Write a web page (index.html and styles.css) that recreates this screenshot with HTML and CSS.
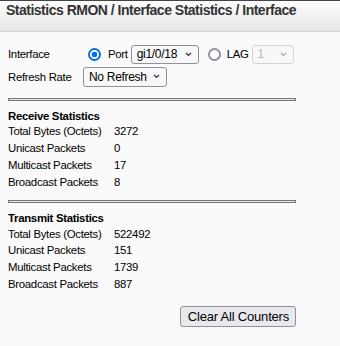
FILE: index.html
```html
<!DOCTYPE html>
<html>
<head>
<meta charset="utf-8">
<link rel="stylesheet" href="styles.css">
</head>
<body>
<div class="header"><h1 class="title">Statistics RMON / Interface Statistics / Interface</h1></div>
<div class="content">
  <div class="form-row">
    <span class="label">Interface</span>
    <input class="radio" type="radio" name="if" id="r-port" checked>
    <label class="opt" for="r-port">Port</label>
    <span class="sel-wrap"><select class="sel sel-port"><option>gi1/0/18</option></select><svg class="chev" width="7" height="5" viewBox="0 0 7 5"><path d="M1 1 L3.5 3.5 L6 1" fill="none" stroke="#333" stroke-width="1.2"/></svg></span>
    <input class="radio radio-lag" type="radio" name="if" id="r-lag">
    <label class="opt" for="r-lag">LAG</label>
    <span class="sel-wrap"><select class="sel sel-lag" disabled><option>1</option></select><svg class="chev" width="7" height="5" viewBox="0 0 7 5"><path d="M1 1 L3.5 3.5 L6 1" fill="none" stroke="#aaa" stroke-width="1.2"/></svg></span>
  </div>
  <div class="form-row row2">
    <span class="label">Refresh Rate</span>
    <span class="sel-wrap"><select class="sel sel-refresh"><option>No Refresh</option></select><svg class="chev" width="7" height="5" viewBox="0 0 7 5"><path d="M1 1 L3.5 3.5 L6 1" fill="none" stroke="#333" stroke-width="1.2"/></svg></span>
  </div>
  <hr class="sep">
  <div class="section">
    <div class="sec-title">Receive Statistics</div>
    <div class="stats">
      <span>Total Bytes (Octets)</span><span>3272</span>
      <span>Unicast Packets</span><span>0</span>
      <span>Multicast Packets</span><span>17</span>
      <span>Broadcast Packets</span><span>8</span>
    </div>
  </div>
  <hr class="sep">
  <div class="section">
    <div class="sec-title">Transmit Statistics</div>
    <div class="stats">
      <span>Total Bytes (Octets)</span><span>522492</span>
      <span>Unicast Packets</span><span>151</span>
      <span>Multicast Packets</span><span>1739</span>
      <span>Broadcast Packets</span><span>887</span>
    </div>
  </div>
  <div class="actions"><button class="btn">Clear All Counters</button></div>
</div>
</body>
</html>
```
FILE: styles.css
```css
html, body {
  margin: 0;
  padding: 0;
  background: #fafafa;
  font-family: "Liberation Sans", Arial, sans-serif;
  font-size: 11.4px;
  letter-spacing: -0.3px;
  color: #000;
}
.header {
  height: 32px;
  border-top: 1px solid #444;
  border-bottom: 1px solid #d2d2d2;
  background: linear-gradient(#fdfdfd, #e6e6e6);
  box-sizing: border-box;
}
.title {
  margin: 0;
  padding: 1px 0 0 6px;
  font-size: 14px;
  line-height: 17px;
  letter-spacing: -0.5px;
  font-weight: bold;
  color: #333;
}
.content {
  width: 288px;
  padding: 12px 8px 0 8px;
}
.form-row {
  display: flex;
  align-items: center;
  height: 20px;
}
.row2 { margin-top: 3px; }
.label { width: 75px; flex: none; }
.radio {
  appearance: none;
  -webkit-appearance: none;
  width: 13px;
  height: 13px;
  margin: 0 7px 0 5px;
  box-sizing: border-box;
  border: 2px solid #8f8f9d;
  border-radius: 50%;
  background: #fff;
}
.radio:checked {
  border-color: #0a6fdf;
  background: radial-gradient(circle, #0a6fdf 0, #0a6fdf 2.6px, #fff 3.1px);
}
.radio-lag { margin-left: 9px; margin-right: 6px; }
.opt { margin-right: 3px; }
.sel-wrap { position: relative; display: inline-flex; }
.sel {
  appearance: none;
  -webkit-appearance: none;
  font-family: "Liberation Sans", Arial, sans-serif;
  font-size: 12px;
  letter-spacing: -0.3px;
  height: 19px;
  box-sizing: border-box;
  padding: 0 0 0 5px;
  border: 1px solid #8f8f9d;
  border-radius: 3px;
  background: #f8f8f9;
  color: #000;
  margin: 0;
}
.sel:disabled { border-color: #c4c4cb; color: #9a9a9a; background: #f8f8f9; }
.chev { position: absolute; right: 7px; top: 7px; pointer-events: none; }
.sel-port { width: 68px; }
.sel-lag { width: 42px; }
.sel-refresh { width: 84px; height: 20px; }
.sep {
  margin: 11px 0 0 0;
  height: 1px;
  border: 1px solid #777;
  background: #e8e8e8;
}
.section { padding-top: 8px; }
.sec-title { font-weight: bold; line-height: 14px; }
.stats {
  display: grid;
  grid-template-columns: 106px auto;
  grid-auto-rows: 16.8px;
  align-items: center;
}
.section + .sep { margin-top: 10px; }
.actions {
  display: flex;
  justify-content: flex-end;
  margin-top: 14px;
}
.btn {
  font-family: "Liberation Sans", Arial, sans-serif;
  font-size: 13px;
  letter-spacing: -0.2px;
  height: 21px;
  padding: 0 6px 0 7px;
  margin: 0;
  border: 1px solid #8f8f9d;
  border-radius: 3px;
  background: #e9e9ed;
  color: #000;
}
```
